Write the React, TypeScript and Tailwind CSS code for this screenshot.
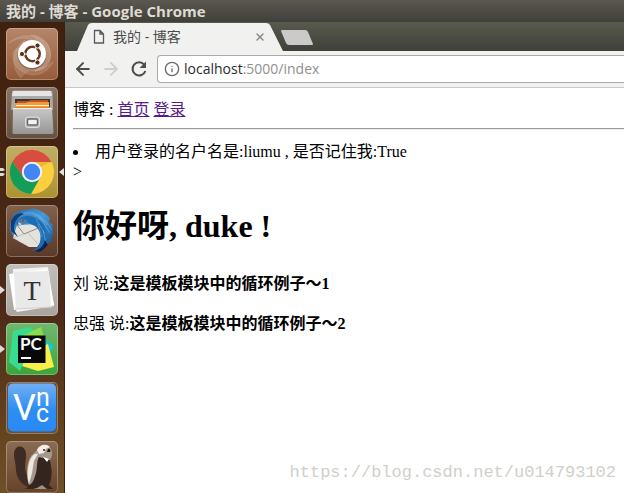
import React from 'react';
import { ArrowLeft, ArrowRight, RotateCw, Info, X } from 'lucide-react';

export default function App() {
  return (
    <div className="min-h-screen flex flex-col bg-white overflow-hidden">
      <header className="h-[22px] shrink-0 flex items-center px-1.5 bg-linear-to-b from-[#5a584f] to-[#403f3a]">
        <span className="font-['Open_Sans','Noto_Sans_CJK_SC',sans-serif] text-[15px] leading-5 font-bold text-[#dfdbd2] whitespace-nowrap">
          我的 - 博客 - Google Chrome
        </span>
      </header>
      <div className="flex grow">
        <Launcher />
        <main className="relative flex flex-col grow min-w-0">
          <TabStrip />
          <Toolbar />
          <BlogPage />
          <div className="absolute right-2 bottom-2 font-['Liberation_Mono',monospace] text-[17px] leading-6 text-[#d0d0c8]">
            https://blog.csdn.net/u014793102
          </div>
        </main>
      </div>
    </div>
  );
}

function TabStrip() {
  return (
    <div className="h-[29px] shrink-0 flex items-end bg-linear-to-b from-[#585a4d] to-[#3f403a]">
      <div className="relative ml-3 w-[206px] h-[29px] flex items-center pl-4 pr-[17px]">
        <svg className="absolute inset-0 w-full h-full" viewBox="0 0 206 29" preserveAspectRatio="none">
          <path d="M0 29 L11 3 Q12 1 15 1 H189 Q192 1 193 3 L206 29Z" fill="#f1f1f0" />
        </svg>
        <svg className="relative w-3 h-4 shrink-0" viewBox="0 0 12 16">
          <path d="M1.5 1.5 H7 L10.5 5 V14 H1.5Z M7 1.5 V5 H10.5" fill="none" stroke="#5a5a5a" strokeWidth="1.3" />
        </svg>
        <span className="relative ml-2 grow font-['Open_Sans','Noto_Sans_CJK_SC',sans-serif] text-sm leading-5 text-[#4b4b4b] whitespace-nowrap">
          我的 - 博客
        </span>
        <button aria-label="Close tab" className="relative text-[#8a8a8a]">
          <X className="w-3 h-3" strokeWidth={3} />
        </button>
      </div>
      <button aria-label="New tab" className="-ml-0.5 mb-[5px] h-4 w-8">
        <svg className="w-8 h-4" viewBox="0 0 32 16">
          <path d="M0 1 Q0 0 1 0 H24 Q26 0 27 2 L32 14 Q32 15 31 15 H8 Q6 15 5 13Z" fill="#cbcac8" />
        </svg>
      </button>
    </div>
  );
}

function Toolbar() {
  return (
    <div className="h-[37px] shrink-0 flex items-center pl-2 bg-[#f1f1f0] border-b border-[#c8c8c8]">
      <button aria-label="Back" className="text-[#4d4d4d]"><ArrowLeft className="w-5 h-5" strokeWidth={2.4} /></button>
      <button aria-label="Forward" className="ml-2 text-[#cfcfce]"><ArrowRight className="w-5 h-5" strokeWidth={2.4} /></button>
      <button aria-label="Reload" className="ml-2 w-5 text-[#4d4d4d]">
        <svg className="w-5 h-5" viewBox="0 0 20 20">
          <path d="M15.2 5.6 A6.6 6.6 0 1 0 16.4 12" fill="none" stroke="currentColor" strokeWidth="2.1" />
          <path d="M17 2.6 V9 H10.6Z" fill="currentColor" />
        </svg>
      </button>
      <label className="ml-2 h-7 grow flex items-center pl-1.5 bg-white border border-r-0 border-[#aaa] rounded-l-sm">
        <Info className="w-4 h-4 shrink-0 text-[#6b6b6b]" strokeWidth={2} />
        <span className="relative ml-1 grow">
          <input
            aria-label="Address"
            defaultValue="localhost:5000/index"
            className="block w-full font-['Open_Sans',sans-serif] text-sm leading-5 text-transparent outline-none"
          />
          <span aria-hidden="true" className="absolute left-0 top-0 pointer-events-none font-['Open_Sans',sans-serif] text-sm leading-5 text-[#8f8f8f]">
            <span className="text-[#2b2b2b]">localhost</span>:5000/index
          </span>
        </span>
      </label>
    </div>
  );
}

function BlogPage() {
  return (
    <div className="pl-2 pt-2.5 text-base leading-6 text-black font-['Liberation_Serif','Noto_Sans_CJK_SC',serif]">
      <div>
        博客 : <a href="#index" className="text-[#551a8b] underline">首页</a>{' '}
        <a href="#login" className="text-[#551a8b] underline">登录</a>
      </div>
      <hr className="mt-1.5 mb-2.5 border-0 border-t border-b border-t-[#9a9a9a] border-b-[#eee]" />
      <ul className="list-disc list-inside">
        <li>用户登录的名户名是:liumu , 是否记住我:True</li>
      </ul>
      <div className="leading-4">&gt;</div>
      <h1 className="my-[22px] text-[32px] leading-12 font-bold">你好呀, duke !</h1>
      <Post author="刘" body="这是模板模块中的循环例子～1" />
      <Post author="忠强" body="这是模板模块中的循环例子～2" />
    </div>
  );
}

function Post({ author, body }: { author: string, body: string }) {
  return <p className="mb-4">{author} 说:<b className="font-bold">{body}</b></p>;
}

function Launcher() {
  return (
    <nav className="w-[65px] shrink-0 flex flex-col gap-[7px] pt-1.5 pl-1.5 bg-linear-to-b from-[#40210e] via-[#4c2917] via-60% to-[#705026] border-r border-[#392015]">
      <Tile label="Search" className="bg-linear-to-b from-[#b48669] to-[#965c39]"><UbuntuIcon /></Tile>
      <Tile label="Files" className="bg-linear-to-b from-[#8a7462] to-[#66513e]"><FilesIcon /></Tile>
      <Tile label="Chrome" className="bg-linear-to-b from-[#c0ae67] to-[#ac922e]" windows={2} focused><ChromeIcon /></Tile>
      <Tile label="Thunderbird" className="bg-linear-to-b from-[#83624d] to-[#5b3928]"><ThunderbirdIcon /></Tile>
      <Tile label="Typora" className="bg-linear-to-b from-[#c2bfbb] to-[#aaa49e]" windows={1}><TyporaIcon /></Tile>
      <Tile label="PyCharm" className="bg-linear-to-b from-[#71b76e] to-[#3ca43b]" windows={1}><PyCharmIcon /></Tile>
      <Tile label="VNC Viewer" className="bg-[#69503c]"><VncIcon /></Tile>
      <Tile label="DBeaver" className="bg-linear-to-b from-[#8c6b54] to-[#654327]"><BeaverIcon /></Tile>
    </nav>
  );
}

function Tile({ label, className, windows = 0, focused, children }: {
  label: string, className: string, windows?: number, focused?: boolean, children: React.ReactNode
}) {
  return (
    <div className="relative w-[52px] h-[52px]">
      <button aria-label={label} className={`block w-[52px] h-[52px] rounded-[5px] shadow-[inset_0_0_0_1px_#ffffff45] ${className}`}>
        {children}
      </button>
      {windows === 1 && (
        <svg className="absolute -left-1.5 top-5 w-[5px] h-3" viewBox="0 0 5 12"><path d="M0 2 L5 6 L0 10Z" fill="#dedad7" /></svg>
      )}
      {windows === 2 && (
        <svg className="absolute -left-1.5 top-5 w-[5px] h-3" viewBox="0 0 5 12"><path d="M0 2 H3 L5 4 L3 5 H0Z M0 7 H3 L5 8 L3 10 H0Z" fill="#dedad7" /></svg>
      )}
      {focused && (
        <svg className="absolute -right-1.5 top-5 w-[5px] h-3" viewBox="0 0 5 12"><path d="M5 2 L0 6 L5 10Z" fill="#e4e0dd" /></svg>
      )}
    </div>
  );
}

function UbuntuIcon() {
  return (
    <svg viewBox="0 0 52 52">
      <g fill="#fff" fillOpacity="0.13" stroke="#fff" strokeOpacity="0.15" strokeWidth="0.8">
        <path d="M3 15 C14 4 34 6 42 17 C48 29 42 40 29 43 C42 35 40 18 26 12 C18 9 10 10 3 15Z" />
        <path d="M25 7 C39 7 47 20 44 33 C41 41 32 45 24 42 C35 41 40 32 38 24 C36 15 31 10 25 7Z" />
        <path d="M7 25 C6 37 14 46 28 47 C36 47 43 42 47 34 C37 42 24 43 17 36 C12 31 12 25 16 19 C10 20 8 22 7 25Z" />
        <path d="M15 50 C4 39 6 20 19 12 C13 22 14 34 25 41" />
      </g>
      <circle cx="26" cy="27" r="14.5" fill="#4b2818" opacity="0.35" />
      <circle cx="26" cy="26" r="14" fill="#fff" />
      <circle cx="26.5" cy="26" r="7.2" fill="none" stroke="#6a3a1c" strokeWidth="2.6" />
      <path d="M26.5 26 L16 26 M26.5 26 L32 16.5 M26.5 26 L32 35.5" stroke="#fff" strokeWidth="1.2" />
      <circle cx="26.5" cy="26" r="5.8" fill="#fff" />
      <g fill="#59301a" stroke="#fff" strokeWidth="1">
        <circle cx="16" cy="26" r="2.6" />
        <circle cx="31.5" cy="17.5" r="2.6" />
        <circle cx="31.5" cy="34.5" r="2.6" />
      </g>
    </svg>
  );
}

function FilesIcon() {
  return (
    <svg viewBox="0 0 52 52">
      <defs>
        <linearGradient id="drawer" x1="0" y1="0" x2="0" y2="1">
          <stop offset="0" stopColor="#c8c8c8" /><stop offset="1" stopColor="#969696" />
        </linearGradient>
      </defs>
      <path d="M6 5 Q6 3.5 8 3.5 H44 Q46 3.5 46.5 5 L47 23 H5Z" fill="#aaa" />
      <path d="M7 4 H45 L46 9 H6Z" fill="#e5e5e5" />
      <path d="M9 12 H44 V22 H9Z" fill="#383532" />
      <path d="M11 14 H23 L24 13 H42 V22 H11Z" fill="#c44d22" />
      <path d="M9 16 H20 L22 15 H43 V23 H9Z" fill="#f39a36" />
      <path d="M10 18 H43 V19 H10Z" fill="#fff1d5" />
      <path d="M9 20 H44 V22 H9Z" fill="#e78125" />
      <path d="M7 21 H46 L47.5 45 Q47.5 47 46 47 H8 Q6.5 47 6.5 45Z" fill="url(#drawer)" />
      <path d="M7 21.5 H46" stroke="#eee" />
      <rect x="19.5" y="30" width="14" height="10.5" rx="2" fill="#bcbcbc" stroke="#ddd" />
      <rect x="21.5" y="32" width="10" height="6" rx="1" fill="#f1f1f1" stroke="#676767" strokeWidth="1.4" />
    </svg>
  );
}

function ChromeIcon() {
  return (
    <svg viewBox="0 0 52 52">
      <circle cx="26" cy="26" r="22" fill="#fdce3e" />
      <path d="M26 16 H45.6 A22 22 0 0 0 6.5 15.5 L17 31Z" fill="#d94c40" />
      <path d="M6.5 15.5 A22 22 0 0 0 25 48 L34.7 31 H17.3Z" fill="#139d59" />
      <path d="M26 16 H45.6 L34 21Z" fill="#d4a72d" opacity="0.5" />
      <circle cx="26" cy="26" r="10.2" fill="#f3f3f3" />
      <circle cx="26" cy="26" r="8.2" fill="#4285f4" />
    </svg>
  );
}

function ThunderbirdIcon() {
  return (
    <svg viewBox="0 0 52 52">
      <defs>
        <linearGradient id="feathers" x1="0" y1="0" x2="1" y2="1">
          <stop offset="0" stopColor="#2464a3" /><stop offset="0.45" stopColor="#479bdb" /><stop offset="1" stopColor="#0b4a91" />
        </linearGradient>
      </defs>
      <path d="M4 22 C3 12 10 5 20 5 C29 1 39 7 44 13 L43 17 L47 20 L46 24 L48 28 L45 32 L46 36 L42 38 L41 42 L36 42 L32 46 L26 46 C35 42 36 35 34 29 L11 29 L15 38 L8 32 L4 25Z" fill="url(#feathers)" />
      <path d="M11 20 L35 19 L37 34 L31 42 L23 42 L7 33Z" fill="#e4e2dc" />
      <path d="M11 20 L18 29 L35 22" fill="none" stroke="#777" strokeWidth="0.8" />
      <path d="M18 29 L7 33 M22 28 L32 39" stroke="#bbb7b0" strokeWidth="0.8" />
      <path d="M10 18 C14 10 24 9 32 14 C42 21 43 33 37 41 L31 44 C36 36 36 26 29 21 L20 17 L13 21Z" fill="#1c6db4" />
      <path d="M12 13 C20 6 31 8 39 17 M14 11 C22 3 34 8 41 20 M30 14 L39 29 M34 12 L44 28 M39 15 L46 25 M37 25 L40 38 M32 19 L36 32" fill="none" stroke="#82bce2" strokeWidth="0.8" opacity="0.65" />
      <path d="M5 16 C8 9 14 7 18 9 C11 12 8 17 8 25 L12 32 L5 26Z" fill="#103f78" />
      <path d="M12 16 C14 13 19 13 22 17 L16 20 L13 20Z" fill="#447db2" />
      <path d="M12 17 L13 21 L16 19Z" fill="#ddd2b2" />
      <circle cx="17" cy="15.5" r="1.1" fill="#bd343e" />
      <path d="M28 46 C36 44 38 39 39 35 L42 40 L38 44 L34 47Z" fill="#14214f" />
    </svg>
  );
}

function TyporaIcon() {
  return (
    <svg viewBox="0 0 52 52">
      <path d="M7 5 L42 3 L48 42 L11 48 L9 45Z" fill="#f2f2f2" />
      <path d="M3 10 L41 5 L48 41 L8 46Z" fill="#fff" />
      <path d="M8 8 L43 7 L45 43 L10 45Z" fill="#e9e9e9" />
      <path d="M9 45 L46 43" stroke="#cfcfcf" />
      <text x="26" y="36" textAnchor="middle" fontSize="28" fontFamily="Liberation Serif, serif" fill="#333">T</text>
    </svg>
  );
}

function PyCharmIcon() {
  return (
    <svg viewBox="0 0 52 52">
      <path d="M7 8 L24 4 L34 13 L20 33 L14 48 L3 39Z" fill="#37dc91" />
      <path d="M35 4 L41 24 L22 44 L17 38 L18 12Z" fill="#8bdc4b" />
      <path d="M37 15 L48 23 L40 37Z" fill="#13c5dc" />
      <path d="M42 21 L48 44 L32 48 L16 43 L22 30Z" fill="#f7f04a" />
      <path d="M12 12.5 H39.5 V40 H12Z" fill="#080808" />
      <text x="14" y="27" fontSize="17" fontWeight="700" fontFamily="Lato, sans-serif" fill="#fff">PC</text>
      <path d="M15 34 H25 V36 H15Z" fill="#fff" />
    </svg>
  );
}

function VncIcon() {
  return (
    <svg viewBox="0 0 52 52">
      <defs>
        <linearGradient id="vnc" x1="0" y1="0" x2="0" y2="1">
          <stop offset="0" stopColor="#70aff1" /><stop offset="0.55" stopColor="#2d8df2" /><stop offset="1" stopColor="#278af5" />
        </linearGradient>
      </defs>
      <rect x="2" y="1.5" width="48" height="48" rx="5" fill="url(#vnc)" />
      <g fill="#fff" fontFamily="Roboto, sans-serif">
        <text x="7" y="38" fontSize="36">V</text>
        <text x="30" y="24" fontSize="25">n</text>
        <text x="30" y="40" fontSize="25">c</text>
      </g>
    </svg>
  );
}

function BeaverIcon() {
  return (
    <svg viewBox="0 0 52 52">
      <path d="M8 13 C8 5 16 3 19 9 C22 16 17 24 20 32 L26 47 C18 46 11 39 10 30 C10 22 8 19 8 13Z" fill="#3d2c25" />
      <path d="M32 14 L43 17 C46 25 47 36 43 44 L47 48 H19 C23 46 25 43 25 39 C22 27 25 18 32 14Z" fill="#35251f" />
      <path d="M31 9 C33 3 42 2 45 8 C47 13 46 16 44 19 L37 17 L33 16 C30 21 32 28 29 35 C28 39 26 43 23 44 C20 36 20 22 25 15Z" fill="#a4988c" />
      <path d="M25 17 C27 13 30 12 32 13 L28 20 L26 32 L23 43 C21 36 21 24 25 17Z" fill="#eee7de" />
      <path d="M31 9 C33 4 40 2 44 6 L40 8 L38 12 L33 13Z" fill="#f4eee7" />
      <path d="M37 16 L43 18 L41 21Z" fill="#fff" />
      <path d="M42 8 C44 7 45 9 44 11 L41 11Z" fill="#211815" />
      <circle cx="38" cy="9" r="1" fill="#281d19" />
      <path d="M31 47 L36 44 L41 48 H27Z" fill="#a49081" />
    </svg>
  );
}
